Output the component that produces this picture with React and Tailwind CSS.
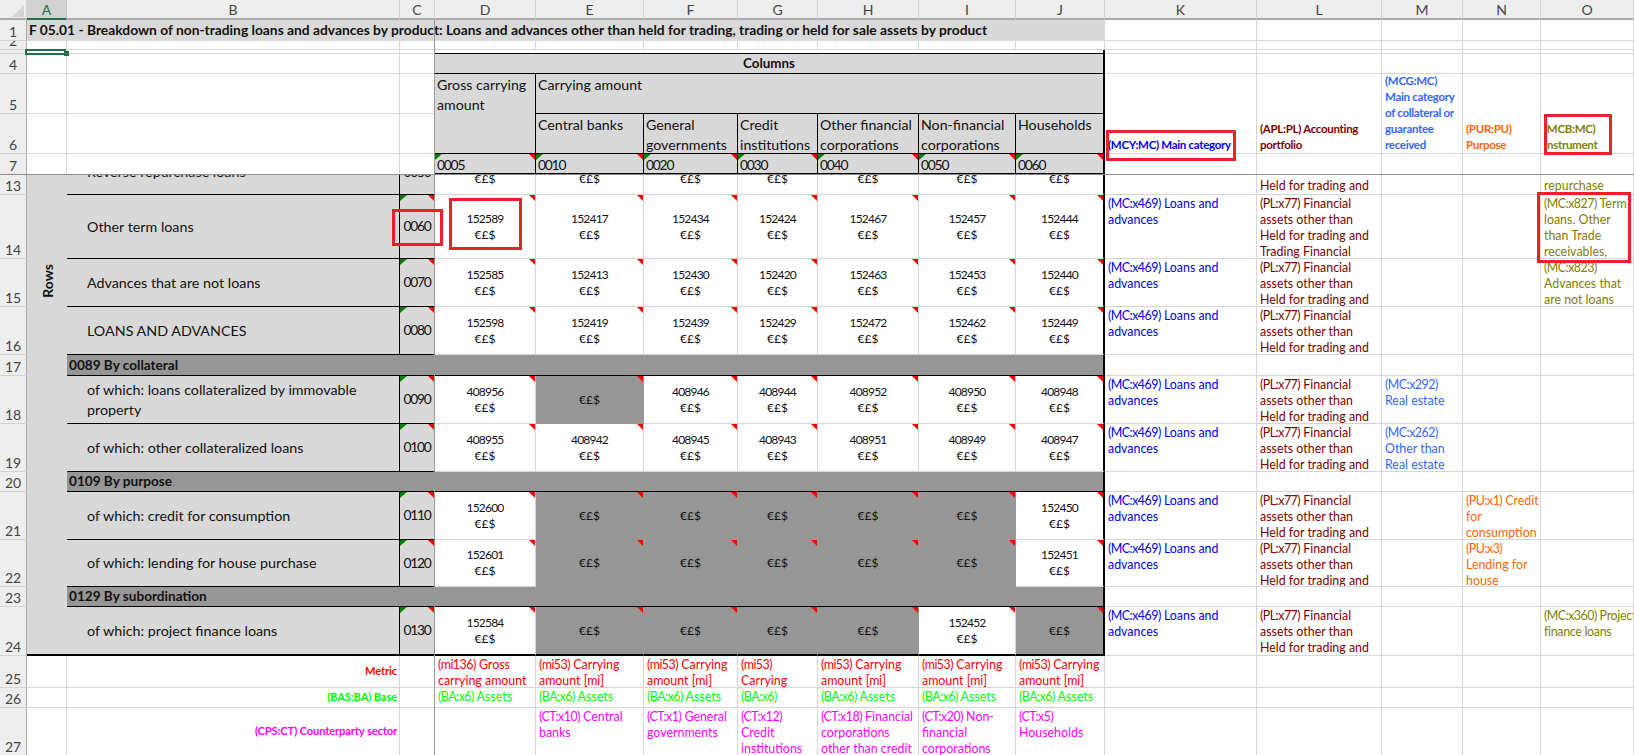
const GL = 'border-r border-b border-[#d6d6d6]';
const HD = 'bg-[#d9d9d9]';

function TriR() {
  return <span className="absolute top-0 right-0 w-[6px] h-[6px] bg-[#ff0000] [clip-path:polygon(0_0,100%_0,100%_100%)]" />;
}
function TriG() {
  return <span className="absolute top-0 left-0 w-[7px] h-[6px] bg-[#008000] [clip-path:polygon(0_0,100%_0,0_100%)]" />;
}
function Col({ children, active }) {
  return (
    <div className={active
      ? 'flex items-center justify-center border-r border-b-2 border-r-[#c8c8c8] border-b-[#217346] bg-[#d2d2d2] text-[#217346] text-[14px]'
      : 'flex items-center justify-center border-r border-b-2 border-r-[#d4d4d4] border-b-[#ababab] bg-[#eeeeee] text-[#444444] text-[14px]'}>
      {children}
    </div>
  );
}
function Rn({ children }) {
  return (
    <div className="flex items-end justify-center overflow-hidden border-r border-b border-r-[#ababab] border-b-[#d4d4d4] bg-[#eeeeee] text-[14px] leading-[17px] text-[#444444]">
      {children}
    </div>
  );
}
function Blank({ className = '' }) {
  return <div className={`${GL} ${className}`} />;
}
function Code({ children, last }) {
  return (
    <div className={`relative flex items-end overflow-hidden border-b-2 border-b-black ${last ? 'border-r-2 border-r-black' : 'border-r border-r-black'} ${HD} pl-[2px] text-[13.8px] leading-[16px] tracking-[-1.2px] text-[#111111]`}>
      <TriG /><TriR />{children}
    </div>
  );
}
function Label({ children }) {
  return (
    <div className={`flex items-center overflow-hidden border-r border-b border-black ${HD} pl-[20px] pr-[2px] text-[14.3px] leading-[20px] text-[#111111]`}>
      <span>{children}</span>
    </div>
  );
}
function RowCode({ children }) {
  return (
    <div className={`relative flex items-center justify-center overflow-hidden border-r border-b border-black ${HD} text-[13.8px] tracking-[-1.2px] text-[#111111]`}>
      <TriG /><TriR />{children}
    </div>
  );
}
function Data({ v, last, bottom }) {
  const cls = `relative flex flex-col items-center justify-center overflow-hidden ${bottom ? 'border-b-2 border-b-black' : 'border-b border-b-[#d6d6d6]'} ${last ? 'border-r-2 border-r-black' : 'border-r border-r-[#d6d6d6]'} bg-white text-[12px] leading-[16px] text-[#111111]`;
  return <div className={cls}><TriR /><span className="tracking-[-0.8px]">{v}</span><span>€£$</span></div>;
}
function Gray({ last, bottom }) {
  const cls = `relative flex items-center justify-center overflow-hidden ${bottom ? 'border-b-2 border-b-black' : 'border-b border-b-[#969696]'} ${last ? 'border-r-2 border-r-black' : 'border-r border-r-[#969696]'} bg-[#969696] text-[12px] leading-[16px] text-[#111111]`;
  return <div className={cls}><TriR />€£$</div>;
}
function Tagged({ text }) {
  if (!text) return null;
  const m = text.match(/^(\(.*?\))([\s\S]*)$/);
  if (!m) return text;
  return <><span className="tracking-[-0.5px]">{m[1]}</span>{m[2]}</>;
}
function Note({ text, c = '' }) {
  return <div className={`${GL} overflow-hidden whitespace-pre-line pl-[3px] pr-[1px] pt-[1px] text-[12.4px] leading-[16px] ${c}`}><Tagged text={text} /></div>;
}
function HeadNote({ children, c = '' }) {
  return <div className={`${GL} row-span-2 flex flex-col justify-end overflow-hidden whitespace-pre-line pl-[3px] pr-[1px] text-[11.5px] font-bold leading-[16px] tracking-[-0.3px] ${c}`}><span>{children}</span></div>;
}
function Section({ children }) {
  return (
    <div className="col-span-9 flex items-center overflow-hidden whitespace-nowrap border-r-2 border-b border-black bg-[#969696] pl-[2px] text-[13.6px] font-bold text-[#111111]">
      {children}
    </div>
  );
}
function Row13({ last }) {
  return (
    <div className={`flex flex-col items-center justify-end overflow-hidden pb-[7px] ${last ? 'border-r-2 border-r-black' : 'border-r border-r-[#d6d6d6]'} border-b border-b-[#d6d6d6] bg-white text-[12px] leading-[16px] text-[#111111]`}>
      <span>€£$</span>
    </div>
  );
}
function Tail({ k = true, l = true, m, n, o, oc = '' }) {
  return (
    <>
      <Note c="text-[#0000ff]" text={k ? '(MC:x469) Loans and advances' : ''} />
      <Note c="text-[#800000]" text={l ? '(PL:x77) Financial assets other than Held for trading and Trading Financial' : ''} />
      <Note c="text-[#3366ff]" text={m} />
      <Note c="text-[#ff6600]" text={n} />
      <Note c={`text-[#808000] ${oc}`} text={o} />
    </>
  );
}
function Foot({ label, c, cells }) {
  return (
    <>
      <div className={`${GL} flex items-center justify-end pr-[2px] text-[11.2px] font-bold tracking-[-0.15px] ${c}`}>{label}</div>
      <Blank />
      {cells.map((t, i) => <Note key={i} c={c} text={t} />)}
      <Blank /><Blank /><Blank /><Blank /><Blank />
    </>
  );
}

export default function App() {
  const letters = ['D','E','F','G','H','I','J','K','L','M','N','O'];
  return (
    <div className="relative h-[755px] w-[1634px] overflow-hidden bg-white font-['Lato',sans-serif]">
      <div className="grid h-[755px] grid-cols-[27px_40px_333px_35px_101px_108px_94px_80px_101px_97px_89px_152px_125px_81px_78px_93px] grid-rows-[20px_21px_9px_4px_20px_40px_40px_21px_20px_64px_48px_48px_21px_48px_48px_20px_48px_47px_20px_49px_32px_20px_48px]">
        {/* column headers */}
        <div className="relative border-r border-b-2 border-r-[#d4d4d4] border-b-[#ababab] bg-[#eeeeee]">
          <span className="absolute left-[12px] top-[5px] h-[12px] w-[12px] bg-[#d4d4d4] [clip-path:polygon(100%_0,100%_100%,0_100%)]" />
        </div>
        <Col active>A</Col><Col>B</Col><Col>C</Col>
        {letters.map(l => <Col key={l}>{l}</Col>)}

        {/* row 1 */}
        <Rn>1</Rn>
        <div className={`col-span-10 flex items-center overflow-hidden whitespace-nowrap ${HD} pl-[2px] text-[13.8px] font-bold text-[#111111]`}>
          F 05.01 - Breakdown of non-trading loans and advances by product: Loans and advances other than held for trading, trading or held for sale assets by product
        </div>
        <Blank /><Blank /><Blank /><Blank /><Blank />

        {/* row 2 */}
        <Rn>2</Rn>
        {Array.from({ length: 15 }, (_, i) => <Blank key={i} />)}
        {/* row 3 */}
        <Rn />
        <Blank /><Blank /><Blank />
        {Array.from({ length: 12 }, (_, i) => <div key={i} className={i < 7 ? 'border-b border-b-black' + (i === 6 ? ' border-r-2 border-r-black' : '') : GL} />)}

        {/* row 4 */}
        <Rn>4</Rn><Blank /><Blank /><Blank />
        <div className={`col-span-7 flex items-center justify-center border-r-2 border-b border-black ${HD} text-[13.4px] font-bold text-[#111111]`}>Columns</div>
        <Blank /><Blank /><Blank /><Blank /><Blank />

        {/* row 5 */}
        <Rn>5</Rn><Blank /><Blank /><Blank />
        <div className={`row-span-2 overflow-hidden border-r border-b border-black ${HD} pl-[2px] pt-[1px] text-[14.2px] leading-[20px] text-[#111111]`}>Gross carrying amount</div>
        <div className={`col-span-6 border-r-2 border-b border-black ${HD} pl-[2px] pt-[1px] text-[14.2px] leading-[20px] text-[#111111]`}>Carrying amount</div>
        <HeadNote c="text-[#0000ff]">(MCY:MC) Main category</HeadNote>
        <HeadNote c="text-[#800000]">{'(APL:PL) Accounting\nportfolio'}</HeadNote>
        <HeadNote c="text-[#3366ff]">{'(MCG:MC)\nMain category\nof collateral or\nguarantee\nreceived'}</HeadNote>
        <HeadNote c="text-[#ff6600]">{'(PUR:PU)\nPurpose'}</HeadNote>
        <HeadNote c="text-[#808000]">{'(MCB:MC)\nInstrument'}</HeadNote>

        {/* row 6 */}
        <Rn>6</Rn><Blank /><Blank /><Blank />
        {['Central banks','General governments','Credit institutions','Other financial corporations','Non-financial corporations','Households'].map((t, i) => (
          <div key={t} className={`overflow-hidden ${i === 5 ? 'border-r-2' : 'border-r'} border-b border-black ${HD} pl-[2px] pt-[1px] text-[14.2px] leading-[20px] text-[#111111]`}>{t}</div>
        ))}

        {/* row 7 */}
        <Rn>7</Rn><Blank /><Blank /><Blank />
        <Code>0005</Code><Code>0010</Code><Code>0020</Code><Code>0030</Code><Code>0040</Code><Code>0050</Code><Code last>0060</Code>
        <Blank /><Blank /><Blank /><Blank /><Blank />

        {/* row 13 */}
        <Rn>13</Rn>
        <div className={`row-span-12 flex justify-center border-b-2 border-b-black ${HD} pt-[89px]`}>
          <span className="h-fit rotate-180 text-[14px] font-bold text-[#111111] [writing-mode:vertical-rl]">Rows</span>
        </div>
        <div className={`flex items-end overflow-hidden border-r border-b border-black ${HD} pb-[12px] pl-[20px] text-[14.3px] leading-[20px] text-[#111111]`}>Reverse repurchase loans</div>
        <div className={`flex items-end justify-center overflow-hidden border-r border-b border-black ${HD} pb-[12px] text-[13.8px] leading-[20px] tracking-[-1.2px] text-[#111111]`}>0050</div>
        <Row13 /><Row13 /><Row13 /><Row13 /><Row13 /><Row13 /><Row13 last />
        <Blank />
        <div className={`${GL} flex items-end overflow-hidden whitespace-nowrap pl-[3px] text-[12.4px] leading-[16px] text-[#800000]`}>Held for trading and</div>
        <Blank /><Blank />
        <div className={`${GL} flex items-end overflow-hidden whitespace-nowrap pl-[3px] text-[12.4px] leading-[16px] text-[#808000]`}>repurchase</div>

        {/* row 14 */}
        <Rn>14</Rn>
        <Label>Other term loans</Label><RowCode>0060</RowCode>
        <Data v="152589" /><Data v="152417" /><Data v="152434" /><Data v="152424" /><Data v="152467" /><Data v="152457" /><Data v="152444" last />
        <Tail o={'(MC:x827) Term\nloans. Other\nthan Trade\nreceivables,'} />

        {/* row 15 */}
        <Rn>15</Rn>
        <Label>Advances that are not loans</Label><RowCode>0070</RowCode>
        <Data v="152585" /><Data v="152413" /><Data v="152430" /><Data v="152420" /><Data v="152463" /><Data v="152453" /><Data v="152440" last />
        <Tail o={'(MC:x823)\nAdvances that\nare not loans'} />

        {/* row 16 */}
        <Rn>16</Rn>
        <Label>LOANS AND ADVANCES</Label><RowCode>0080</RowCode>
        <Data v="152598" /><Data v="152419" /><Data v="152439" /><Data v="152429" /><Data v="152472" /><Data v="152462" /><Data v="152449" last />
        <Tail />

        {/* row 17 */}
        <Rn>17</Rn>
        <Section>0089 By collateral</Section>
        <Blank /><Blank /><Blank /><Blank /><Blank />

        {/* row 18 */}
        <Rn>18</Rn>
        <Label>of which: loans collateralized by immovable property</Label><RowCode>0090</RowCode>
        <Data v="408956" /><Gray /><Data v="408946" /><Data v="408944" /><Data v="408952" /><Data v="408950" /><Data v="408948" last />
        <Tail m={'(MC:x292)\nReal estate'} />

        {/* row 19 */}
        <Rn>19</Rn>
        <Label>of which: other collateralized loans</Label><RowCode>0100</RowCode>
        <Data v="408955" /><Data v="408942" /><Data v="408945" /><Data v="408943" /><Data v="408951" /><Data v="408949" /><Data v="408947" last />
        <Tail m={'(MC:x262)\nOther than\nReal estate'} />

        {/* row 20 */}
        <Rn>20</Rn>
        <Section>0109 By purpose</Section>
        <Blank /><Blank /><Blank /><Blank /><Blank />

        {/* row 21 */}
        <Rn>21</Rn>
        <Label>of which: credit for consumption</Label><RowCode>0110</RowCode>
        <Data v="152600" /><Gray /><Gray /><Gray /><Gray /><Gray /><Data v="152450" last />
        <Tail n={'(PU:x1) Credit\nfor\nconsumption'} />

        {/* row 22 */}
        <Rn>22</Rn>
        <Label>of which: lending for house purchase</Label><RowCode>0120</RowCode>
        <Data v="152601" /><Gray /><Gray /><Gray /><Gray /><Gray /><Data v="152451" last />
        <Tail n={'(PU:x3)\nLending for\nhouse'} />

        {/* row 23 */}
        <Rn>23</Rn>
        <Section>0129 By subordination</Section>
        <Blank /><Blank /><Blank /><Blank /><Blank />

        {/* row 24 */}
        <Rn>24</Rn>
        <div className={`flex items-center overflow-hidden border-r border-b-2 border-black ${HD} pl-[20px] text-[14.3px] leading-[20px] text-[#111111]`}>of which: project finance loans</div>
        <div className={`relative flex items-center justify-center overflow-hidden border-r border-b-2 border-black ${HD} text-[13.8px] tracking-[-1.2px] text-[#111111]`}><TriG /><TriR />0130</div>
        <Data v="152584" bottom /><Gray bottom /><Gray bottom /><Gray bottom /><Gray bottom /><Data v="152452" bottom /><Gray last bottom />
        <Tail oc="tracking-[-0.3px] [&]:whitespace-pre" o={'(MC:x360) Project\nfinance loans'} />

        {/* row 25 */}
        <Rn>25</Rn><Blank />
        <Foot label="Metric" c="text-[#ff0000]" cells={['(mi136) Gross carrying amount','(mi53) Carrying amount [mi]','(mi53) Carrying amount [mi]','(mi53)\nCarrying amount [mi]','(mi53) Carrying amount [mi]','(mi53) Carrying amount [mi]','(mi53) Carrying amount [mi]']} />
        {/* row 26 */}
        <Rn>26</Rn><Blank />
        <Foot label="(BAS:BA) Base" c="text-[#00ff00]" cells={['(BA:x6) Assets','(BA:x6) Assets','(BA:x6) Assets','(BA:x6)\nAssets','(BA:x6) Assets','(BA:x6) Assets','(BA:x6) Assets']} />
        {/* row 27 */}
        <Rn>27</Rn><Blank />
        <Foot label="(CPS:CT) Counterparty sector" c="text-[#ff00ff]" cells={['','(CT:x10) Central\nbanks','(CT:x1) General\ngovernments','(CT:x12)\nCredit\ninstitutions','(CT:x18) Financial\ncorporations\nother than credit','(CT:x20) Non-\nfinancial\ncorporations','(CT:x5)\nHouseholds']} />
      </div>

      {/* freeze panes */}
      <div className="absolute bottom-0 left-[434px] top-[20px] w-[1px] bg-[#9a9a9a]" />
      <div className="absolute left-0 right-0 top-[174px] h-[1px] bg-[#8c8c8c]" />

      {/* active cell */}
      <div className="absolute left-[25px] top-[49px] h-[6px] w-[41px] border-2 border-[#217346]" />
      <div className="absolute left-[64px] top-[51px] h-[5px] w-[5px] bg-[#217346]" />

      {/* annotations */}
      <div className="absolute left-[392px] top-[209px] h-[37px] w-[51px] border-[3px] border-[#e8212b]" />
      <div className="absolute left-[449px] top-[198px] h-[52px] w-[73px] border-[3px] border-[#e8212b]" />
      <div className="absolute left-[1106px] top-[130px] h-[31px] w-[130px] border-[3px] border-[#e8212b]" />
      <div className="absolute left-[1544px] top-[114px] h-[41px] w-[68px] border-[3px] border-[#e8212b]" />
      <div className="absolute left-[1537px] top-[192px] h-[71px] w-[94px] border-[3px] border-[#e8212b]" />
    </div>
  );
}
